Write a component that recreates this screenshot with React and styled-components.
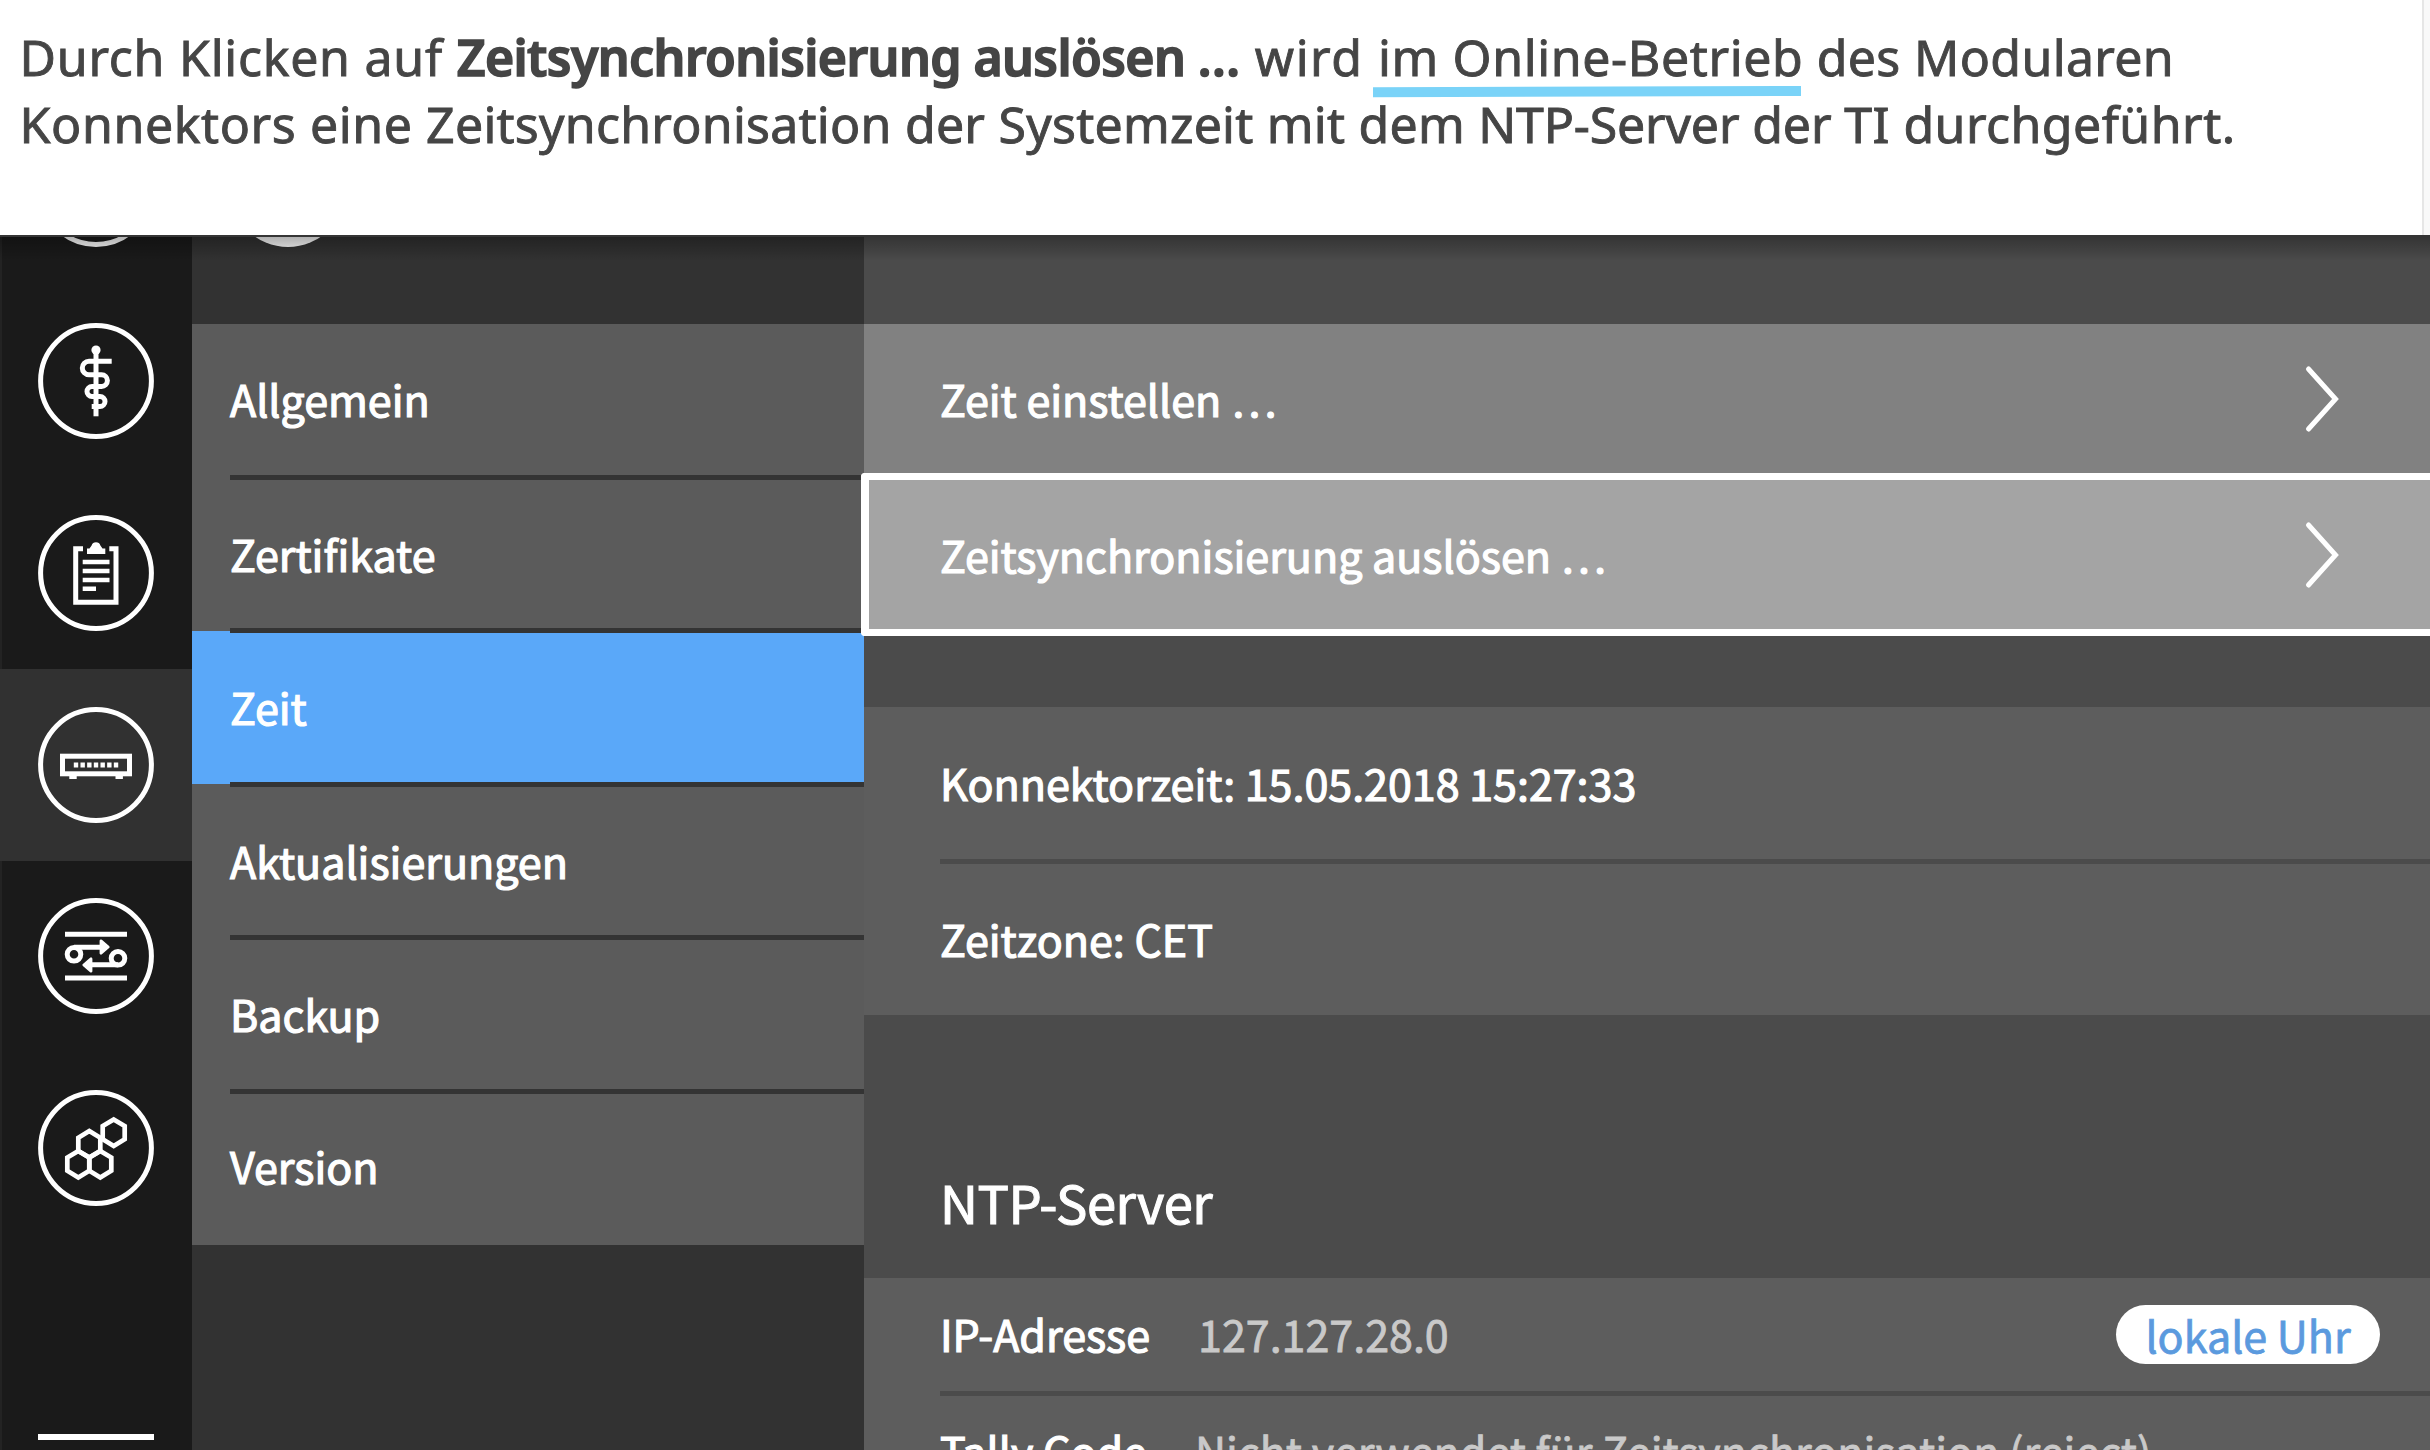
import React from "react";
import styled, { createGlobalStyle } from "styled-components";

const Global = createGlobalStyle`
  *, *::before, *::after { box-sizing: border-box; }
  body { margin: 0; background: #fff; }
`;

const Page = styled.div`
  width: 2430px;
  height: 1450px;
  overflow: hidden;
  display: flex;
  flex-direction: column;
  font-family: "Noto Sans CJK SC", "Open Sans", sans-serif;
  font-size: 43px;
  line-height: 60px;
`;

/* ---------- explanatory text ---------- */

const Intro = styled.header`
  flex: none;
  height: 235px;
  width: 2424px;
  padding: 24px 0 0 19.5px;
  border-right: 2px solid #e6e6e6;
  background: #fff;
  box-shadow: 6px 0 0 #f9f9f9;
  color: #454545;
  font-family: "Noto Sans", sans-serif;
  font-size: 50px;
  line-height: 67px;
  -webkit-text-stroke: 0.9px #454545;
`;

const IntroLine = styled.div`
  white-space: pre;
`;

const Words = styled.span`
  letter-spacing: ${(p) => p.$spacing}px;
`;

const Strong = styled.strong`
  font-weight: 600;
  letter-spacing: -0.58px;
  -webkit-text-stroke: 1.5px #454545;
`;

const Marked = styled(Words)`
  position: relative;
`;

const Marker = styled.svg`
  position: absolute;
  left: -5px;
  top: 63px;
  width: 428px;
  height: 12px;
`;

/* ---------- console ---------- */

const Console = styled.main`
  position: relative;
  flex: 1;
  min-height: 0;
  display: grid;
  grid-template-columns: 192px 672px 1fr;
  overflow: hidden;
  background: #4b4b4b;
  color: #fff;

  &::before {
    content: "";
    position: absolute;
    inset: 0 0 auto 0;
    height: 26px;
    z-index: 2;
    border-top: 2px solid #353535;
    background: linear-gradient(rgba(0, 0, 0, 0.3), rgba(0, 0, 0, 0));
  }
`;

const Rail = styled.nav`
  display: flex;
  flex-direction: column;
  align-items: center;
  min-height: 0;
  overflow: hidden;
  background: #1a1a1a;
  box-shadow: inset 2px 0 #232323;
`;

const RailItem = styled.div`
  flex: none;
  width: 192px;
  height: 191.8px;
  display: flex;
  align-items: center;
  justify-content: center;
  background: ${(p) => (p.$active ? "#313131" : "transparent")};

  &:first-child {
    margin-top: -141.6px;
  }
`;

const RailRule = styled.div`
  flex: none;
  width: 116px;
  height: 6px;
  margin-top: 189.8px;
  background: #fff;
`;

const IconSvg = styled.svg`
  width: 118px;
  height: 118px;
  fill: none;
  stroke: #fff;
  stroke-width: 5;
`;

const Sidebar = styled.aside`
  min-height: 0;
  overflow: hidden;
  background: #323232;
`;

const SidebarTop = styled.div`
  display: flex;
  align-items: flex-start;
  height: 88.5px;
  padding-left: 37.5px;
`;

const Avatar = styled.div`
  width: 116px;
  height: 116px;
  margin-top: -104px;
  border-radius: 50%;
  background: #fdfdfd;
`;

const MenuItem = styled.div`
  height: 153.5px;
  padding: 0 0 ${(p) => p.$lift}px 38px;
  display: flex;
  align-items: center;
  background: ${(p) => (p.$active ? "#5aa8f9" : "#5b5b5b")};
  -webkit-text-stroke: 1.2px #fff;
`;

const MenuRule = styled.div`
  position: relative;
  height: 5px;
  margin: -2.5px 0 -2.5px 38px;
  background: #343434;
`;

const Content = styled.section`
  min-height: 0;
  overflow: hidden;
  display: flex;
  flex-direction: column;
  padding-top: 88.5px;
  margin-left: -3px;
  padding-left: 3px;
  position: relative;
`;

const ActionRow = styled.div`
  flex: none;
  height: 149.5px;
  padding: 0 91px 0 76px;
  display: flex;
  align-items: center;
  justify-content: space-between;
  background: #818181;
  -webkit-text-stroke: 1.2px #fff;
`;

const FocusedRow = styled(ActionRow)`
  height: 163px;
  margin-left: -3px;
  padding: 0 91px 1px 71px;
  border: solid #fff;
  border-width: 7px 0 7px 8px;
  border-radius: 4px 0 0 4px;
  background: #a4a4a4;
`;

const Chevron = styled.svg`
  width: 36px;
  height: 68px;
  margin-top: 2px;
  fill: none;
  stroke: #fff;
  stroke-width: 5;
  stroke-linecap: round;
`;

const Panel = styled.div`
  flex: none;
  margin-top: ${(p) => p.$gap || 0}px;
  background: #5d5d5d;
`;

const InfoRow = styled.div`
  height: ${(p) => p.$height}px;
  padding: 0 50px 2px 76px;
  display: flex;
  align-items: center;
  gap: 48px;
`;

const Label = styled.span`
  white-space: pre;
  -webkit-text-stroke: 1.2px #fff;
`;

const Value = styled.span`
  flex: 1;
  white-space: pre;
  color: #c9c9c9;
  -webkit-text-stroke: 0.8px #c9c9c9;
`;

const InfoRule = styled.div`
  height: 5px;
  margin-left: 76px;
  background: #4b4b4b;
`;

const Heading = styled.h2`
  flex: none;
  height: 263px;
  margin: 0;
  padding: 0 0 47px 76px;
  display: flex;
  align-items: flex-end;
  font-size: 52.5px;
  font-weight: 400;
  letter-spacing: -0.45px;
  -webkit-text-stroke: 1.1px #fff;
`;

const Pill = styled.span`
  flex: none;
  width: 264px;
  height: 59px;
  margin-top: 2px;
  padding-bottom: 1px;
  border-radius: 30px;
  display: flex;
  align-items: center;
  justify-content: center;
  background: #fff;
  color: #5b9ade;
  -webkit-text-stroke: 0.8px #5b9ade;
`;

/* ---------- icons ---------- */

function Ring({ children }) {
  return (
    <IconSvg viewBox="-59 -59 118 118">
      <circle r="55.4" />
      {children}
    </IconSvg>
  );
}

const StaffIcon = () => (
  <Ring>
    <circle cy="-31" r="4.6" fill="#fff" stroke="none" />
    <path d="M0 -31V35.3" />
    <path d="M15.7 -19.7H-7a6.7 6.7 0 0 0 0 13.4H5.5a5.9 5.9 0 0 1 0 11.8H-4a5 5 0 0 0 0 10H4a5 5 0 0 1 0 10H-4.3" />
  </Ring>
);

const ClipboardIcon = () => (
  <Ring>
    <path d="M-13 -24.3H-20.3V29.3H20V-24.3H13.3" />
    <path
      d="M-9 -19V-24.5H-6.5L-4.4 -27.5A4.6 4.6 0 0 1 4.4 -27.5L6.5 -24.5H9.3V-19Z"
      fill="#fff"
      stroke="none"
    />
    <path d="M-13.3 -11H13.5M-13.3 -2H13.5M-13.3 7H13.5M-13.3 15.7H0" strokeWidth="4.6" />
  </Ring>
);

const RouterIcon = () => (
  <Ring>
    <rect x="-33.5" y="-8.8" width="67" height="17.6" />
    <path d="M-22.2 0H22.5" strokeDasharray="4.4 2.27" />
    <path d="M-26.7 12.2H-19.3M19.5 12.2H26.9" strokeWidth="3.4" />
  </Ring>
);

const TransferIcon = () => (
  <Ring>
    <path d="M-31 -21.7H31M-31 22H31" />
    <circle cx="-22" cy="-1.7" r="6.8" />
    <circle cx="22" cy="2.3" r="6.8" />
    <path d="M-22 -8.7H8M22 8.8H-8" />
    <path
      d="M5 -15.2L12.2 -9L5 -2.8ZM-5 15.2L-12.2 9L-5 2.8Z"
      fill="#fff"
      strokeWidth="2.8"
      strokeLinejoin="round"
    />
  </Ring>
);

const HEX = "0,-13.3 11,-6.6 11,6.6 0,13.3 -11,6.6 -11,-6.6";

const HexagonsIcon = () => (
  <Ring>
    <polygon points={HEX} transform="translate(17.7 -15.3)" strokeWidth="4.7" />
    <polygon points={HEX} transform="translate(-6.7 -3.7)" strokeWidth="4.7" />
    <polygon points={HEX} transform="translate(-17.7 16.2)" strokeWidth="4.7" />
    <polygon points={HEX} transform="translate(4.3 16.2)" strokeWidth="4.7" />
  </Ring>
);

const ChevronIcon = () => (
  <Chevron viewBox="0 0 36 68">
    <path d="M5.5 4L32.5 34L5.5 64" />
  </Chevron>
);

const RAIL = [
  { id: "home", Icon: Ring },
  { id: "medical", Icon: StaffIcon },
  { id: "protocol", Icon: ClipboardIcon },
  { id: "device", Icon: RouterIcon, active: true },
  { id: "network", Icon: TransferIcon },
  { id: "modules", Icon: HexagonsIcon },
];

const MENU = [
  { label: "Allgemein", lift: 5 },
  { label: "Zertifikate", lift: 2 },
  { label: "Zeit", lift: 3, active: true },
  { label: "Aktualisierungen", lift: 2 },
  { label: "Backup", lift: 3 },
  { label: "Version", lift: 5 },
];

export default function App() {
  return (
    <Page>
      <Global />
      <Intro>
        <IntroLine>
          <Words $spacing={0.75}>{"Durch Klicken auf "}</Words>
          <Strong>
            {"Zeitsynchronisierung auslösen "}
            <Words $spacing={0.4}>...</Words>
          </Strong>
          <Words $spacing={1.5}>{" wird "}</Words>
          <Marked $spacing={0.62}>
            im Online-Betrieb
            <Marker viewBox="0 0 428 12">
              <polygon points="0,1.2 428,0 428,10 0,11.2" fill="#7ad3f8" />
            </Marker>
          </Marked>
          <Words $spacing={0.35}>{" des Modularen"}</Words>
        </IntroLine>
        <IntroLine>
          <Words $spacing={0.6}>{"Konnektors eine "}</Words>
          <Words $spacing={0.25}>{"Zeitsynchronisation der Systemzeit mit dem "}</Words>
          <Words $spacing={-0.15}>{"NTP-Server der "}</Words>
          <Words $spacing={0.45}>TI durchgeführt.</Words>
        </IntroLine>
      </Intro>

      <Console>
        <Rail>
          {RAIL.map(({ id, Icon, active }) => (
            <RailItem key={id} $active={active}>
              <Icon />
            </RailItem>
          ))}
          <RailRule />
        </Rail>

        <Sidebar>
          <SidebarTop>
            <Avatar />
          </SidebarTop>
          {MENU.map(({ label, lift, active }, i) => (
            <React.Fragment key={label}>
              {i > 0 && <MenuRule />}
              <MenuItem $active={active} $lift={lift}>
                {label}
              </MenuItem>
            </React.Fragment>
          ))}
        </Sidebar>

        <Content>
          <ActionRow>
            Zeit einstellen …
            <ChevronIcon />
          </ActionRow>
          <FocusedRow>
            Zeitsynchronisierung auslösen …
            <ChevronIcon />
          </FocusedRow>

          <Panel $gap={71}>
            <InfoRow $height={151.5}>
              <Label>Konnektorzeit: 15.05.2018 15:27:33</Label>
            </InfoRow>
            <InfoRule />
            <InfoRow $height={151}>
              <Label>Zeitzone: CET</Label>
            </InfoRow>
          </Panel>

          <Heading>NTP-Server</Heading>

          <Panel>
            <InfoRow $height={113.5}>
              <Label>IP-Adresse</Label>
              <Value>127.127.28.0</Value>
              <Pill>lokale Uhr</Pill>
            </InfoRow>
            <InfoRule />
            <InfoRow $height={109}>
              <Label>Tally Code</Label>
              <Value>Nicht verwendet für Zeitsynchronisation (reject)</Value>
            </InfoRow>
          </Panel>
        </Content>
      </Console>
    </Page>
  );
}
